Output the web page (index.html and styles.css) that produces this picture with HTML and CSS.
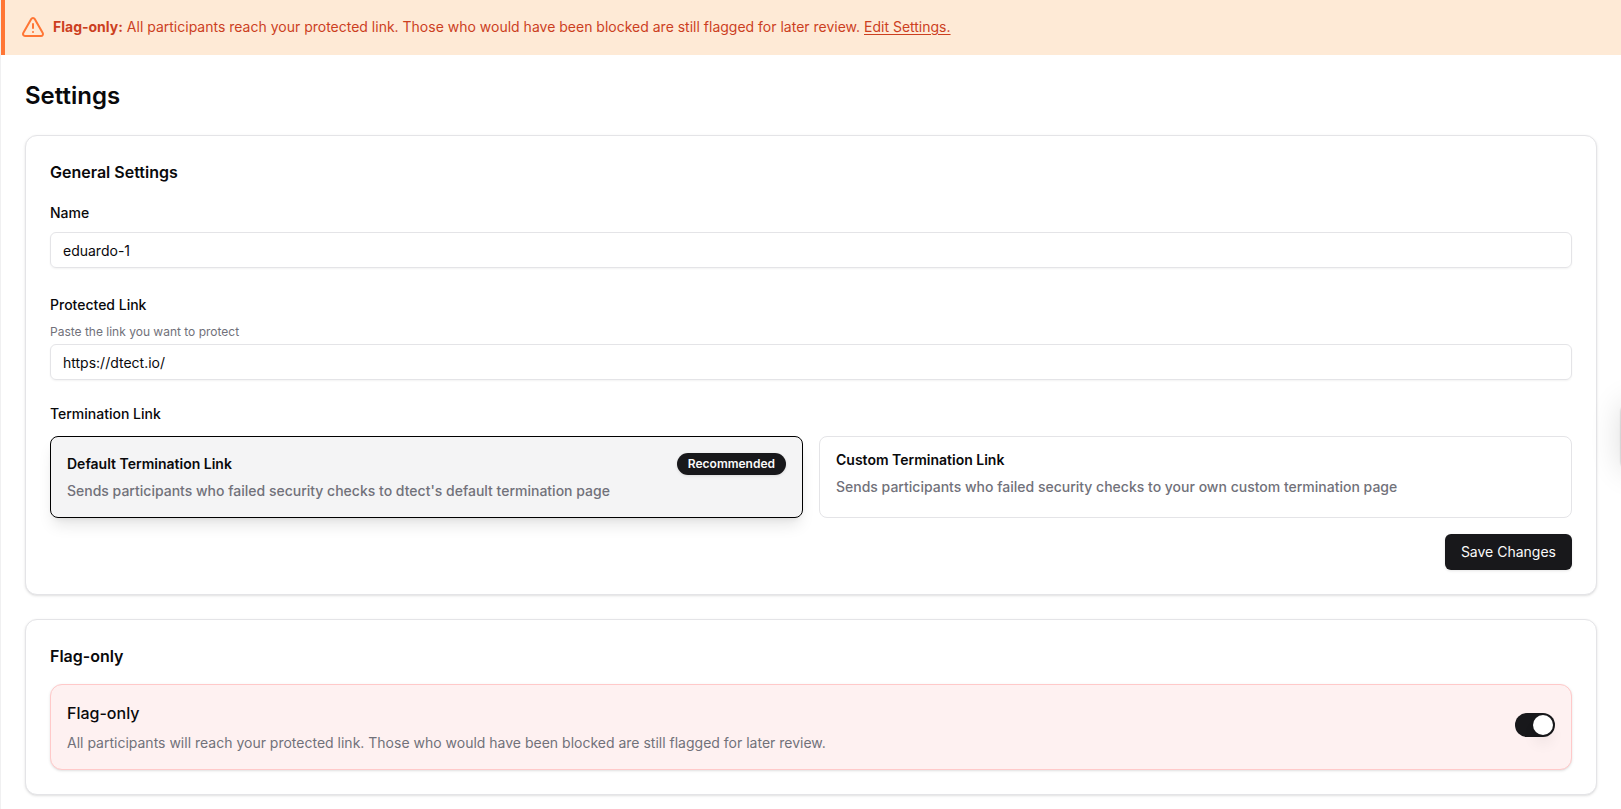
FILE: index.html
```html
<!DOCTYPE html>
<html lang="en">
<head>
	<meta charset="utf-8">
	<meta name="viewport" content="width=device-width, initial-scale=1">
	<title>Settings</title>
	<link rel="stylesheet" href="styles.css">
</head>
<body>

<div class="page">
	<div class="banner" role="status">
		<svg class="banner-icon" viewBox="0 0 24 24" fill="none" stroke="currentColor" stroke-width="2" stroke-linecap="round" stroke-linejoin="round" aria-hidden="true">
			<path d="m21.73 18-8-14a2 2 0 0 0-3.48 0l-8 14A2 2 0 0 0 4 21h16a2 2 0 0 0 1.73-3"/>
			<path d="M12 9v4"/>
			<path d="M12 17h.01"/>
		</svg>
		<p><strong>Flag-only:</strong> All participants reach your protected link. Those who would have been blocked are still flagged for later review. <a href="#flag-only">Edit Settings.</a></p>
	</div>

	<main class="content">
		<h1>Settings</h1>

		<form class="card">
			<h2>General Settings</h2>

			<div class="field">
				<label for="name">Name</label>
				<input class="text-input" type="text" id="name" value="eduardo-1">
			</div>

			<div class="field">
				<label for="link">Protected Link</label>
				<p class="hint" id="link-hint">Paste the link you want to protect</p>
				<input class="text-input" type="text" id="link" value="https://dtect.io/" aria-describedby="link-hint">
			</div>

			<fieldset class="termination">
				<legend>Termination Link</legend>
				<div class="options">
					<label class="option">
						<input type="radio" name="termination" value="default" checked>
						<span class="option-head">
							<span class="option-title">Default Termination Link</span>
							<span class="badge">Recommended</span>
						</span>
						<span class="option-text">Sends participants who failed security checks to dtect's default termination page</span>
					</label>
					<label class="option">
						<input type="radio" name="termination" value="custom">
						<span class="option-head">
							<span class="option-title">Custom Termination Link</span>
						</span>
						<span class="option-text">Sends participants who failed security checks to your own custom termination page</span>
					</label>
				</div>
			</fieldset>

			<div class="actions">
				<button type="submit" class="btn">Save Changes</button>
			</div>
		</form>

		<section class="card" id="flag-only">
			<h2>Flag-only</h2>
			<div class="flag-box">
				<div class="flag-text">
					<label for="flag-switch">Flag-only</label>
					<p>All participants will reach your protected link. Those who would have been blocked are still flagged for later review.</p>
				</div>
				<div class="switch-wrap">
					<input class="switch" type="checkbox" role="switch" id="flag-switch" checked>
				</div>
			</div>
		</section>
	</main>
</div>

<!-- side tab, tucked behind the window edge -->
<div class="side-tab"></div>

</body>
</html>
```

FILE: styles.css
```css
* {
	margin: 0;
	padding: 0;
	box-sizing: border-box;
}
body {
	font: 14px/20px Inter, sans-serif;
	color: #09090b;
	background: #fff;
	overflow-x: hidden;
}
input, button {
	font: inherit;
	color: inherit;
}
.page {
	min-height: 100vh;
	border-left: 1px solid #f0f0f1;
}

/* banner */
.banner {
	display: flex;
	align-items: center;
	gap: 8px;
	padding: 15px 16px 16px;
	border-left: 4px solid #ff7635;
	background: #feead6;
	color: #cc3f1f;
}
.banner-icon {
	flex: none;
	width: 24px;
	height: 24px;
	color: #ff7635;
}
.banner strong {
	font-weight: 700;
}
.banner a {
	color: inherit;
	text-underline-offset: 2px;
}

.content {
	display: flex;
	flex-direction: column;
	gap: 24px;
	padding: 26px 24px 14px;
}
h1 {
	font-size: 24px;
	line-height: 30px;
	font-weight: 600;
}
h2 {
	font-size: 16px;
	line-height: 24px;
	font-weight: 600;
}
.card {
	padding: 24px;
	border: 1px solid #e4e4e7;
	border-radius: 12px;
	background: #fff;
	box-shadow: 0 1px 3px rgba(0, 0, 0, .1), 0 1px 2px -1px rgba(0, 0, 0, .1);
}

/* form */
.field {
	display: flex;
	flex-direction: column;
	margin-bottom: 26px;
}
h2 + .field {
	margin-top: 18px;
}
.field label {
	margin-bottom: 8px;
	line-height: 22px;
	font-weight: 500;
}
.hint {
	margin-bottom: 4px;
	font-size: 12px;
	line-height: 16px;
	color: #71717a;
}
.text-input {
	width: 100%;
	height: 36px;
	padding: 0 12px;
	border: 1px solid #e4e4e7;
	border-radius: 6px;
	background: transparent;
	box-shadow: 0 1px 2px rgba(0, 0, 0, .05);
}
.termination {
	border: 0;
	margin-top: -2px;
}
.termination legend {
	margin-bottom: 12px;
	font-weight: 500;
}
.options {
	display: grid;
	grid-template-columns: 1fr 1fr;
	gap: 16px;
}
.option {
	position: relative;
	display: grid;
	gap: 6px;
	padding: 16px;
	border: 1px solid #e4e4e7;
	border-radius: 8px;
	font-weight: 500;
	cursor: pointer;
}
.option:has(:checked) {
	border-color: #000;
	background: #f4f4f5;
	box-shadow: 0 10px 15px -3px rgba(0, 0, 0, .1), 0 4px 6px -4px rgba(0, 0, 0, .1);
}
.option input {
	position: absolute;
	opacity: 0;
}
.option-head {
	display: flex;
	align-self: start;
	align-items: center;
	justify-content: space-between;
}
.option-title {
	line-height: 14px;
	font-weight: 600;
}
.option-text {
	color: #71717a;
}
.badge {
	padding: 3px 11px;
	border-radius: 11px;
	background: #18181b;
	color: #fafafa;
	font-size: 12px;
	line-height: 16px;
	font-weight: 600;
	box-shadow: 0 1px 3px rgba(0, 0, 0, .1);
}
.actions {
	display: flex;
	justify-content: flex-end;
	margin-top: 16px;
}
.btn {
	height: 36px;
	padding: 0 16px;
	border: 0;
	border-radius: 6px;
	background: #18181b;
	color: #fafafa;
	box-shadow: 0 1px 3px rgba(0, 0, 0, .1);
	cursor: pointer;
}

/* flag-only */
.flag-box {
	display: flex;
	align-items: center;
	justify-content: space-between;
	gap: 16px;
	margin-top: 16px;
	padding: 16px;
	border: 1px solid #ffc9c9;
	border-radius: 12px;
	background: #fef1f1;
	box-shadow: 0 1px 3px rgba(0, 0, 0, .1), 0 1px 2px -1px rgba(0, 0, 0, .1);
}
.flag-text {
	display: flex;
	flex-direction: column;
	gap: 8px;
}
.flag-text label {
	font-size: 16px;
	line-height: 24px;
	font-weight: 500;
}
.flag-text p {
	color: #71717a;
}
.switch-wrap {
	display: flex;
	padding-bottom: 4px;
}
.switch {
	appearance: none;
	display: flex;
	justify-content: flex-start;
	width: 40px;
	height: 24px;
	padding: 2px;
	border-radius: 12px;
	background: #e4e4e7;
	cursor: pointer;
}
.switch::before {
	content: "";
	width: 20px;
	height: 20px;
	border-radius: 50%;
	background: #fff;
	box-shadow: 0 10px 15px -3px rgba(0, 0, 0, .1), 0 4px 6px -4px rgba(0, 0, 0, .1);
}
.switch:checked {
	justify-content: flex-end;
	background: #18181b;
}

.side-tab {
	position: fixed;
	top: 404px;
	left: 100%;
	width: 40px;
	height: 66px;
	border-radius: 8px 0 0 8px;
	box-shadow: 0 0 32px rgba(0, 0, 0, .14), 0 0 2px rgba(0, 0, 0, .4);
}
```
